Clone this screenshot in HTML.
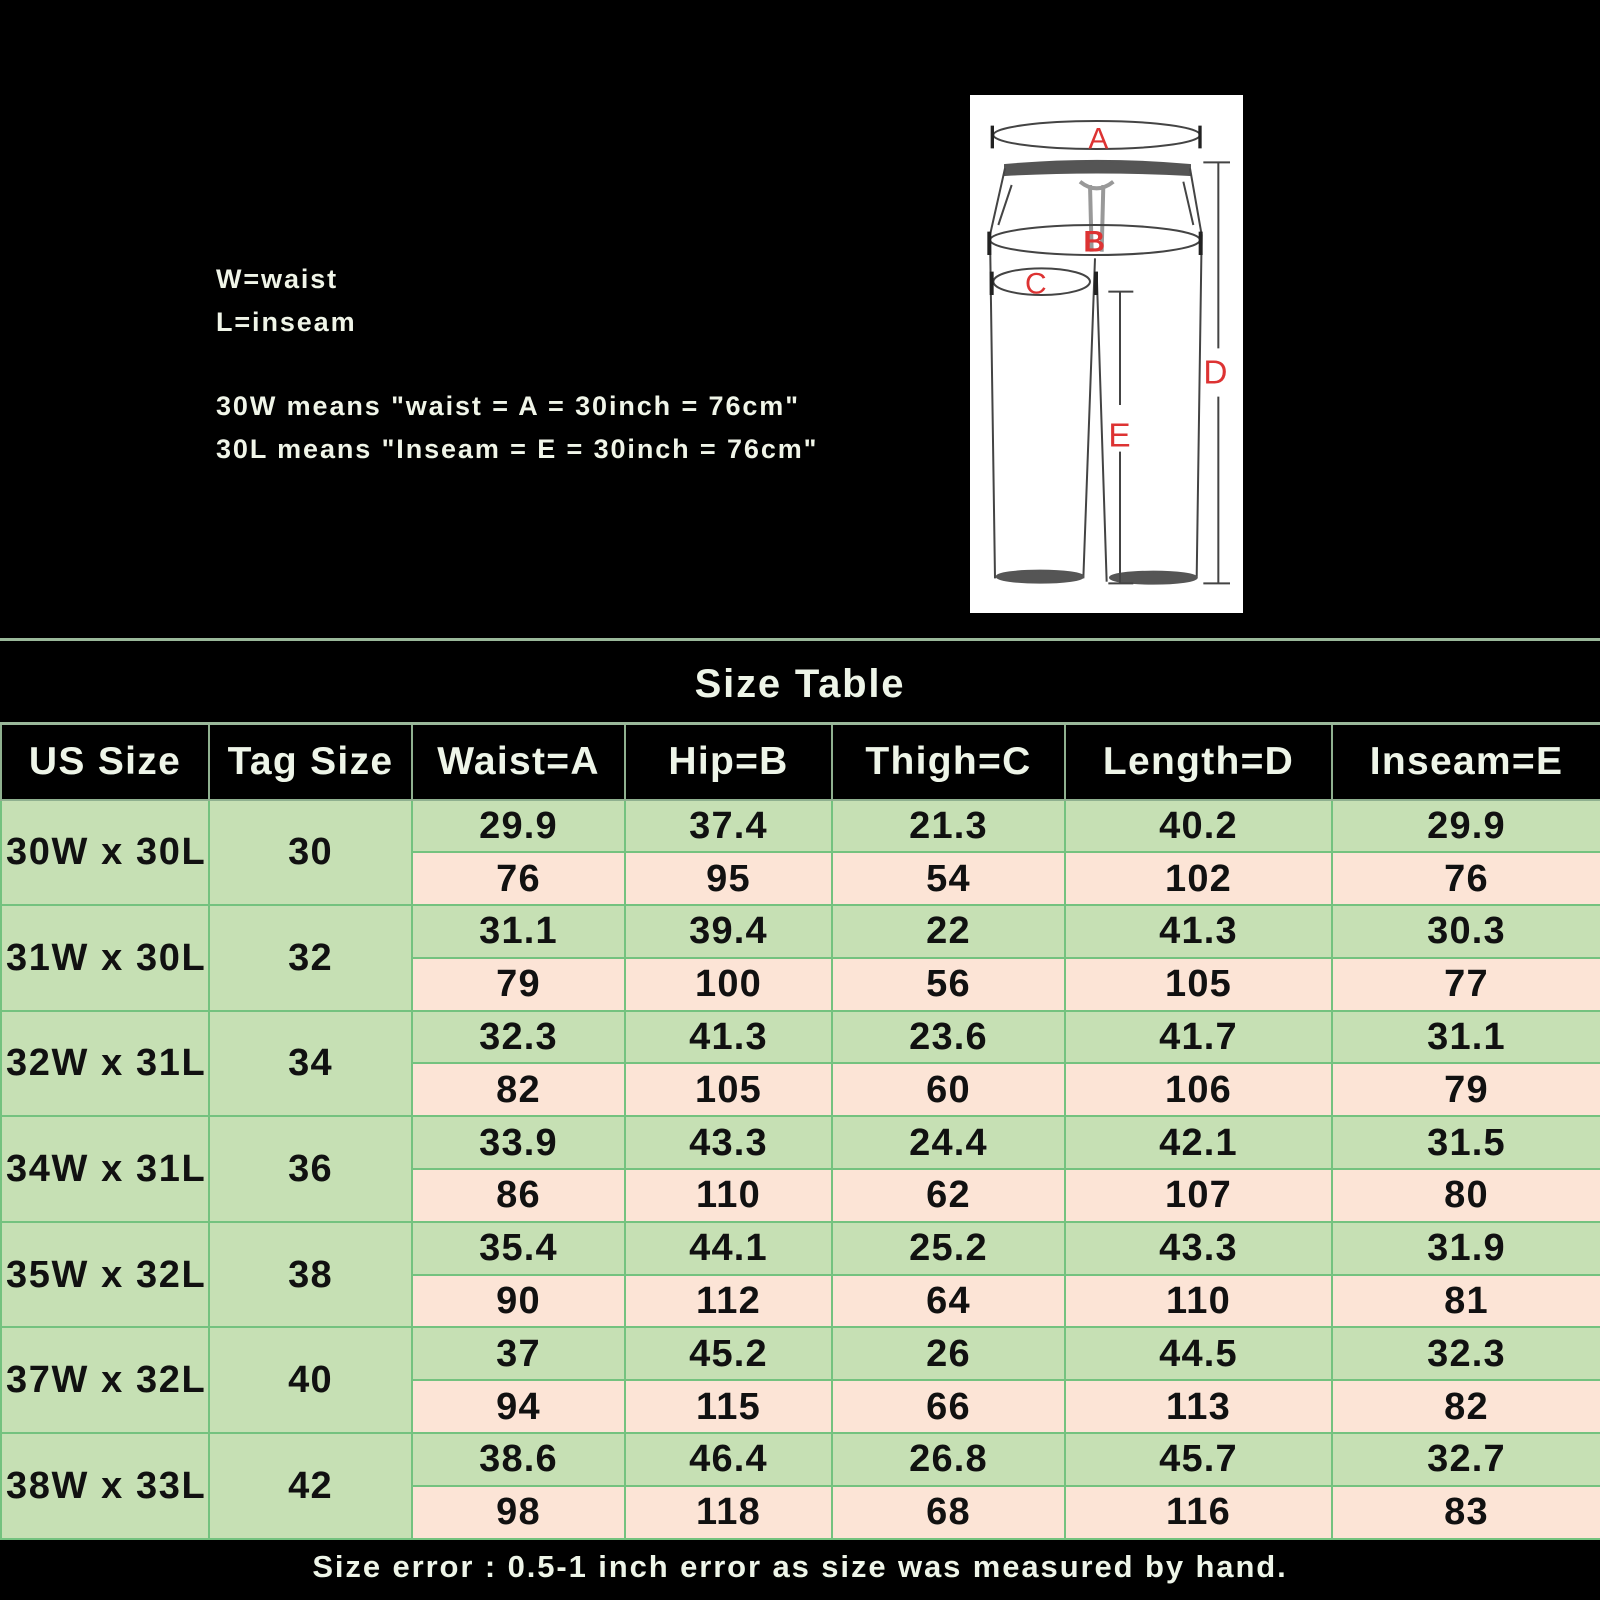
<!DOCTYPE html>
<html><head><meta charset="utf-8"><style>
*{margin:0;padding:0;box-sizing:border-box}
body{width:1600px;height:1600px;background:#000;position:relative;overflow:hidden;font-family:"Liberation Sans",sans-serif;font-weight:bold}
.t{position:absolute;left:216px;color:#f0f5e8;font-size:27px;white-space:nowrap;letter-spacing:1.9px}
#box{position:absolute;left:970px;top:95px;width:273px;height:518px;background:#fff}
#title{position:absolute;left:0;width:1600px;top:662px;text-align:center;color:#eef5e8;font-size:40px;letter-spacing:1.8px}
#line1{position:absolute;left:0;top:638px;width:1600px;height:3px;background:#9ab89a}
table{position:absolute;left:0;top:722px;width:1600px;border-collapse:collapse;table-layout:fixed}
td,th{border:2px solid #74c27f;text-align:center;font-size:38px;color:#111;padding:0;overflow:hidden;white-space:nowrap;letter-spacing:1.2px}
th{background:#000;color:#eef5e8;height:76px;border-color:#8fb08f;border-top:3px solid #9ab89a;font-size:39px;letter-spacing:1.3px}
td{height:52.8px;line-height:48px}
.g{background:#c6e0b4}.p{background:#fce4d6}
td.l{text-align:left;padding-left:4px;letter-spacing:1.6px}
#foot{position:absolute;left:0;width:1600px;top:1549px;text-align:center;color:#eef5e8;font-size:31px;letter-spacing:1.9px}
</style></head><body>
<div class="t" style="top:264px">W=waist</div>
<div class="t" style="top:307px">L=inseam</div>
<div class="t" style="top:391px">30W means "waist = A = 30inch = 76cm"</div>
<div class="t" style="top:434px">30L means "Inseam = E = 30inch = 76cm"</div>
<div id="box"></div>
<svg style="position:absolute;left:940px;top:85px" width="290" height="530" viewBox="0 0 870 1590" fill="none" stroke="#444" stroke-width="6">
<ellipse cx="470" cy="150" rx="310" ry="42"/>
<path d="M157 122V190M780 122V190" stroke-width="10" stroke="#222"/>
<path d="M195 240Q470 215 750 240L750 270Q470 255 195 270Z" fill="#555" stroke="#555"/>
<path d="M195 250L150 450L165 1480M750 250L785 450L770 1480M465 520L430 1480M470 560L500 1490M215 300L175 420M730 290L760 420"/>
<path d="M420 290Q470 330 520 290M450 300L455 500M490 300L485 500" stroke="#999" stroke-width="12"/>
<ellipse cx="300" cy="1475" rx="130" ry="18" fill="#555" stroke="#555"/>
<ellipse cx="640" cy="1478" rx="130" ry="18" fill="#555" stroke="#555"/>
<ellipse cx="465" cy="465" rx="315" ry="45"/>
<ellipse cx="305" cy="590" rx="145" ry="40"/>
<path d="M148 440V510M782 440V510M155 560V630M468 560V630" stroke-width="12" stroke="#222"/>
<path d="M790 232H870M835 232V790M835 935V1495M790 1495H870M505 620H580M540 620V960M540 1100V1495M505 1495H580"/>
<g fill="#d33" stroke="none" font-family="Liberation Sans,sans-serif" font-weight="normal">
<text x="445" y="190" font-size="90">A</text>
<text x="430" y="500" font-size="90" font-weight="bold">B</text>
<text x="255" y="625" font-size="90">C</text>
<text x="790" y="895" font-size="100">D</text>
<text x="505" y="1085" font-size="100">E</text>
</g>
</svg>
<div id="line1"></div>
<div id="title">Size Table</div>
<table>
<colgroup><col style="width:208px"><col style="width:203px"><col style="width:213px"><col style="width:207px"><col style="width:233px"><col style="width:267px"><col style="width:269px"></colgroup>
<tr><th>US Size</th><th>Tag Size</th><th>Waist=A</th><th>Hip=B</th><th>Thigh=C</th><th>Length=D</th><th>Inseam=E</th></tr>
<tr class="g"><td rowspan="2" class="l g">30W x 30L</td><td rowspan="2" class="g">30</td><td>29.9</td><td>37.4</td><td>21.3</td><td>40.2</td><td>29.9</td></tr>
<tr class="p"><td>76</td><td>95</td><td>54</td><td>102</td><td>76</td></tr>
<tr class="g"><td rowspan="2" class="l g">31W x 30L</td><td rowspan="2" class="g">32</td><td>31.1</td><td>39.4</td><td>22</td><td>41.3</td><td>30.3</td></tr>
<tr class="p"><td>79</td><td>100</td><td>56</td><td>105</td><td>77</td></tr>
<tr class="g"><td rowspan="2" class="l g">32W x 31L</td><td rowspan="2" class="g">34</td><td>32.3</td><td>41.3</td><td>23.6</td><td>41.7</td><td>31.1</td></tr>
<tr class="p"><td>82</td><td>105</td><td>60</td><td>106</td><td>79</td></tr>
<tr class="g"><td rowspan="2" class="l g">34W x 31L</td><td rowspan="2" class="g">36</td><td>33.9</td><td>43.3</td><td>24.4</td><td>42.1</td><td>31.5</td></tr>
<tr class="p"><td>86</td><td>110</td><td>62</td><td>107</td><td>80</td></tr>
<tr class="g"><td rowspan="2" class="l g">35W x 32L</td><td rowspan="2" class="g">38</td><td>35.4</td><td>44.1</td><td>25.2</td><td>43.3</td><td>31.9</td></tr>
<tr class="p"><td>90</td><td>112</td><td>64</td><td>110</td><td>81</td></tr>
<tr class="g"><td rowspan="2" class="l g">37W x 32L</td><td rowspan="2" class="g">40</td><td>37</td><td>45.2</td><td>26</td><td>44.5</td><td>32.3</td></tr>
<tr class="p"><td>94</td><td>115</td><td>66</td><td>113</td><td>82</td></tr>
<tr class="g"><td rowspan="2" class="l g">38W x 33L</td><td rowspan="2" class="g">42</td><td>38.6</td><td>46.4</td><td>26.8</td><td>45.7</td><td>32.7</td></tr>
<tr class="p"><td>98</td><td>118</td><td>68</td><td>116</td><td>83</td></tr>
</table>
<div id="foot">Size error : 0.5-1 inch error as size was measured by hand.</div>
</body></html>
